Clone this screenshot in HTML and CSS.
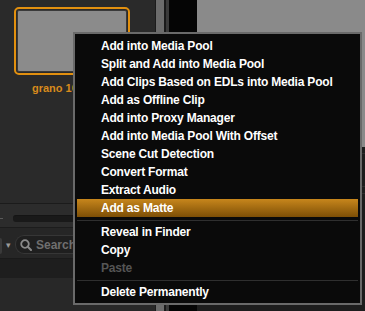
FILE: index.html
```html
<!DOCTYPE html>
<html>
<head>
<meta charset="utf-8">
<link rel="stylesheet" href="styles.css">
</head>
<body>
<div class="app">
  <div class="left">
    <div class="bin">
      <div class="clip">
        <div class="thumb"><div class="thumb-img"></div></div>
        <div class="clip-name">grano 10</div>
      </div>
    </div>
    <div class="slider-row">
      <span class="tick"></span>
      <span class="track"></span>
    </div>
    <div class="search-row">
      <span class="btn-edge"></span>
      <span class="caret">▾</span>
      <div class="search">
        <svg class="mag" width="12" height="12" viewBox="0 0 12 12"><circle cx="5" cy="5" r="3.8" fill="none" stroke="#8a8a8a" stroke-width="1.8"/><path d="M7.8 7.8 L11 11" stroke="#8a8a8a" stroke-width="2" stroke-linecap="round"/></svg>
        <span class="search-text">Search</span>
      </div>
    </div>
    <div class="list-head"></div>
    <div class="list"></div>
  </div>
  <div class="divider">
    <span class="d1"></span><span class="d2"></span><span class="d3"></span><span class="d4"></span>
  </div>
  <div class="black-strip"></div>
  <div class="right">
    <div class="viewer"></div>
    <div class="lower">
      <div class="lrow"></div>
      <div class="lrow tall"></div>
      <div class="lrow"></div>
    </div>
  </div>
</div>

<div class="menu">
  <div class="item">Add into Media Pool</div>
  <div class="item">Split and Add into Media Pool</div>
  <div class="item">Add Clips Based on EDLs into Media Pool</div>
  <div class="item">Add as Offline Clip</div>
  <div class="item">Add into Proxy Manager</div>
  <div class="item">Add into Media Pool With Offset</div>
  <div class="item">Scene Cut Detection</div>
  <div class="item">Convert Format</div>
  <div class="item">Extract Audio</div>
  <div class="item active">Add as Matte</div>
  <div class="sep"></div>
  <div class="item">Reveal in Finder</div>
  <div class="item">Copy</div>
  <div class="item disabled">Paste</div>
  <div class="sep"></div>
  <div class="item">Delete Permanently</div>
</div>
</body>
</html>
```
FILE: styles.css
```css
html, body {
  margin: 0;
  padding: 0;
  width: 365px;
  height: 311px;
  overflow: hidden;
  background: #2a2a2a;
  font-family: "Liberation Sans", Arial, sans-serif;
}

.app {
  display: flex;
  width: 365px;
  height: 311px;
  position: relative;
}

.left {
  width: 155px;
  display: flex;
  flex-direction: column;
  background: #2a2a2a;
}

.bin {
  height: 204px;
  box-sizing: border-box;
  padding: 7px 0 0 14px;
  border-bottom: 1px solid #1b1b1b;
}

.clip {
  width: 116px;
}

.thumb {
  width: 116px;
  height: 68px;
  box-sizing: border-box;
  border: 2px solid #e2900f;
  border-radius: 5px;
  padding: 1px;
  background: #2a2a2a;
}

.thumb-img {
  width: 100%;
  height: 100%;
  box-sizing: border-box;
  background: #8b8b8b;
  border: 1px solid #3a3a3a;
  border-radius: 2px;
}

.clip-name {
  margin-top: 7px;
  margin-left: 18px;
  color: #d88a1c;
  font-size: 11px;
  font-weight: bold;
  white-space: nowrap;
}

.slider-row {
  height: 24px;
  box-sizing: border-box;
  padding-top: 5px;
  display: flex;
  align-items: center;
  gap: 10px;
  background: #2c2c2c;
  border-bottom: 1px solid #1c1c1c;
}

.tick {
  width: 3px;
  height: 1px;
  background: #5a5a5a;
}

.track {
  flex: 1;
  height: 6px;
  border-radius: 3px;
  background: #191919;
  border-top: 1px solid #141414;
}

.search-row {
  height: 31px;
  box-sizing: border-box;
  padding-bottom: 4px;
  display: flex;
  align-items: flex-end;
  background: #262626;
  border-bottom: 1px solid #1a1a1a;
}

.btn-edge {
  width: 2px;
  height: 16px;
  background: #3a3a3a;
  border-radius: 0 2px 2px 0;
}

.caret {
  color: #9a9a9a;
  font-size: 9px;
  width: 14px;
  line-height: 17px;
  text-align: center;
  margin-left: -1px;
}

.search {
  flex: 1;
  height: 17px;
  display: flex;
  align-items: center;
  gap: 4px;
  padding-left: 4px;
  background: #1f1f1f;
  border: 1px solid #363636;
  border-right: none;
  border-radius: 9px 0 0 9px;
}

.search-text {
  color: #6f6f6f;
  font-size: 12px;
  font-weight: bold;
}

.list-head {
  height: 19px;
  background: #1e1e1e;
}

.list {
  flex: 1;
  background: #282828;
}

.divider {
  width: 14px;
  display: flex;
}
.d1 { width: 1px; background: #1c1c1c; }
.d2 { width: 8px; background: #6c6c6c; }
.d3 { width: 2px; background: #1a1a1a; }
.d4 { width: 3px; background: #3a3a3a; }

.black-strip {
  width: 28px;
  background: #050505;
}

.right {
  flex: 1;
  display: flex;
  flex-direction: column;
}

.viewer {
  height: 147px;
  background: #8a8a8a;
}

.lower {
  flex: 1;
  background: #1d1d1d;
  display: flex;
  flex-direction: column;
}

.lrow {
  height: 6px;
  border-bottom: 1px solid #2e2e2e;
}
.lrow.tall { height: 32px; }

.menu {
  position: absolute;
  left: 73px;
  top: 32px;
  width: 289px;
  height: 273px;
  box-sizing: border-box;
  background: #0a0a0a;
  border: 2px solid #6a6a6a;
  padding: 3px 2px 0 2px;
}

.item {
  height: 18px;
  line-height: 18px;
  padding-left: 24px;
  color: #ffffff;
  font-size: 12px;
  font-weight: bold;
  letter-spacing: -0.2px;
  white-space: nowrap;
}

.item.active {
  background: linear-gradient(to bottom, #c7861c, #7d4f06);
}

.item.disabled {
  color: #555555;
}

.sep {
  height: 1px;
  background: #2f2f2f;
  margin: 3px 0 2px 0;
}
```
